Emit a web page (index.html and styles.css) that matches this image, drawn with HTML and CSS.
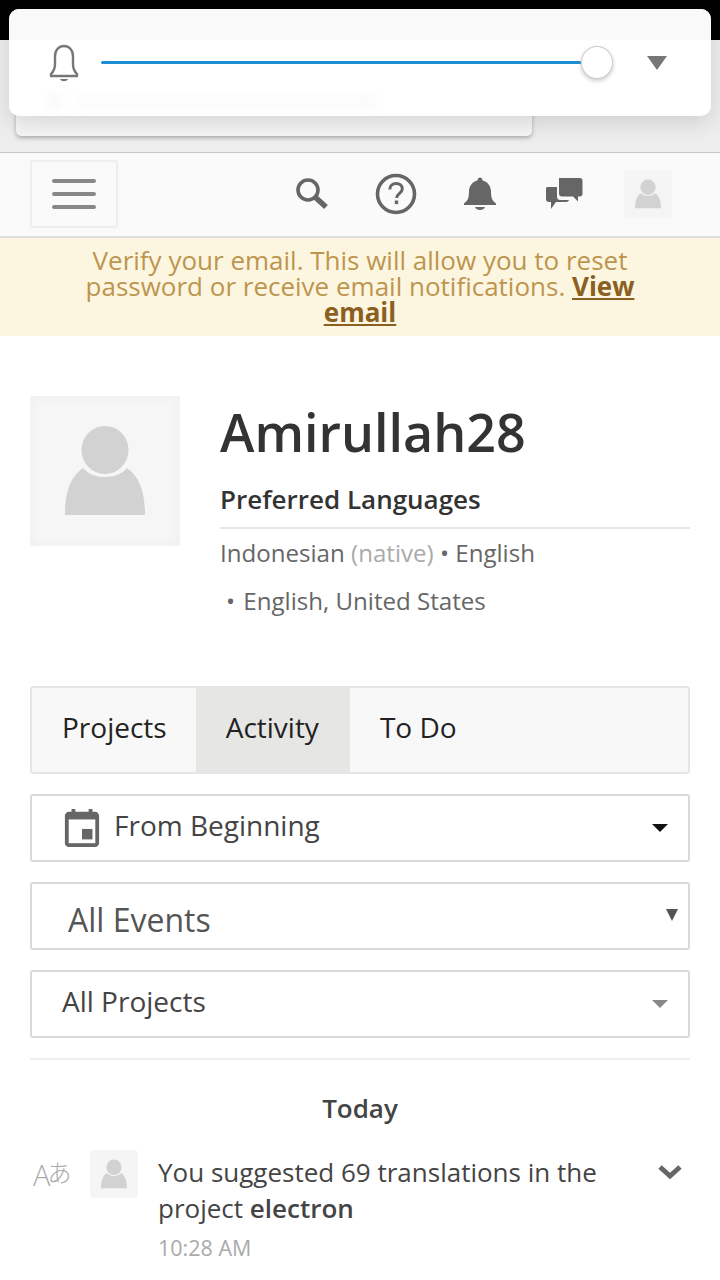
FILE: index.html
```html
<!DOCTYPE html>
<html lang="en">
<head>
<meta charset="utf-8">
<title>Amirullah28</title>
<link rel="stylesheet" href="styles.css">
</head>
<body>
<div class="statusbar"></div>
<div class="shade"><div class="shade-card"></div></div>
<div class="volume">
  <div class="volume-ghost"></div>
  <div class="volume-row">
    <svg class="vol-bell" viewBox="0 0 32 44" width="32" height="44"><path d="M3 32c3-3 4-5 4-10v-8c0-6 4-10 9-10s9 4 9 10v8c0 5 1 7 4 10v2H3z" fill="none" stroke="#777" stroke-width="2.4" stroke-linejoin="round"/><path d="M12 37h8c-1 3-7 3-8 0z" fill="#777"/></svg>
    <div class="track"><div class="knob"></div></div>
    <div class="vol-caret"></div>
  </div>
  <div class="volume-blur"><span class="blur-dot"></span><span class="blur-line"></span></div>
</div>
<nav class="navbar">
  <div class="burger"><span></span><span></span><span></span></div>
  <div class="nav-icons">
    <svg class="ic-search" viewBox="0 0 34 34" width="34" height="34"><circle cx="13" cy="13" r="10" fill="none" stroke="#666" stroke-width="3.6"/><path d="M20 20l11 10" stroke="#666" stroke-width="5.5" fill="none"/></svg>
    <svg class="ic-help" viewBox="0 0 42 42" width="42" height="42"><circle cx="21" cy="21" r="18.5" fill="none" stroke="#666" stroke-width="3.6"/><path d="M14.8 16.5c0-3.8 2.8-6 6.300-6 3.600 0 6.200 2.100 6.200 5.300 0 4.700-5.600 4.500-5.600 9.200" fill="none" stroke="#666" stroke-width="3"/><rect x="19.800" y="27.500" width="3.400" height="3.600" fill="#666"/></svg>
    <svg class="ic-bell" viewBox="0 3 34 35" width="34" height="36"><path d="M1 30c4-3 5-6 5-12 0-6 4-10 8.500-11 0-4 5-4 5 0C24 8 28 12 28 18c0 6 1 9 5 12v1.500H1z" fill="#666"/><path d="M12 33.500h10c-1 4-9 4-10 0z" fill="#666"/></svg>
    <svg class="ic-chat" viewBox="0 0 38 34" width="38" height="34"><path d="M2 10h10v9c0 3 1 4 4 4h8c-.5 1.500-2 2-3 2H11l-5 7v-7H4c-2 0-3-1-3-3V12c0-1 .5-2 1-2z" fill="#666"/><path d="M14 1h21c1.500 0 2.500 1 2.500 2.500V17c0 1.500-1 2.500-2.500 2.500h-2v5l-5-5H17c-2 0-3-1-3-3z" fill="#666"/></svg>
    <div class="nav-avatar"><svg viewBox="0 0 80 90" width="26" height="30"><use href="#person"/></svg></div>
  </div>
</nav>
<div class="banner">Verify your email. This will allow you to reset password or receive email notifications. <a>View email</a></div>
<main class="main">
  <section class="profile">
    <div class="avatar"><svg viewBox="0 0 80 90" width="80" height="90"><g id="person" fill="#d2d2d2"><ellipse cx="40" cy="24" rx="23.500" ry="24"/><path d="M18 42c5 6 13 9 22 9s17-3 22-9c11 8 18 21 18 47H0c0-26 7-39 18-47z"/></g></svg></div>
    <div class="info">
      <h1>Amirullah28</h1>
      <h2>Preferred Languages</h2>
      <div class="langs">
        <div class="lang-row">Indonesian <span class="native">(native)</span> • English</div>
        <div class="lang-row second"><span class="bullet">•</span> English, United States</div>
      </div>
    </div>
  </section>
  <div class="tabs">
    <div class="tab first">Projects</div>
    <div class="tab active">Activity</div>
    <div class="tab">To Do</div>
  </div>
  <div class="select date">
    <svg viewBox="0 0 36 40" width="36" height="38"><path d="M4 3h3V0h4v3h14V0h4v3h3c2 0 4 2 4 4v29c0 2-2 4-4 4H4c-2 0-4-2-4-4V7c0-2 2-4 4-4z" fill="#666"/><rect x="4" y="11" width="28" height="25" fill="#fff"/><rect x="18" y="21" width="11" height="11" fill="#666"/></svg>
    <span>From Beginning</span>
    <i class="caret dark"></i>
  </div>
  <div class="select events"><span>All Events</span><i class="events-caret"></i></div>
  <div class="select projects"><span>All Projects</span><i class="caret grey"></i></div>
  <hr class="rule">
  <h3 class="day">Today</h3>
  <article class="item">
    <div class="item-type"><span class="a">A</span><span class="ja">あ</span></div>
    <div class="item-avatar"><svg viewBox="0 0 80 90" width="26" height="30"><use href="#person"/></svg></div>
    <div class="item-body">
      <p>You suggested 69 translations in the project <strong>electron</strong></p>
      <time>10:28 AM</time>
    </div>
    <svg class="chev" viewBox="0 0 26 16" width="26" height="16"><path d="M3 3l10 9 10-9" fill="none" stroke="#666" stroke-width="5"/></svg>
  </article>
</main>
</body>
</html>
```
FILE: styles.css
```css
* { box-sizing: border-box; }
html, body { margin: 0; padding: 0; }
body { width: 720px; height: 1280px; overflow: hidden; background: #fff; font-family: "Open Sans", "Noto Sans", sans-serif; color: #333; position: relative; }
.statusbar { height: 40px; background: #000; }
.shade { height: 113px; background: #eee; border-bottom: 1px solid #c4c4c4; padding: 0 0 0 16px; }
.shade-card { width: 516px; height: 96px; background: #f6f6f6; border-radius: 0 0 5px 5px; box-shadow: 0 2px 4px rgba(0,0,0,.28); }
.volume { position: absolute; left: 9px; top: 9px; width: 702px; height: 107px; border-radius: 10px; background: #fff; box-shadow: 0 6px 24px rgba(0,0,0,.14); overflow: hidden; }
.volume-ghost { height: 31px; background: #f9f9f9; }
.volume-row { display: flex; align-items: center; height: 44px; padding-left: 39px; margin-top: 2px; }
.vol-bell { flex: none; }
.track { position: relative; width: 480px; height: 3px; margin-left: 21px; background: #1b8fd1; border-radius: 2px; margin-top: -4px; }
.knob { position: absolute; right: -32px; top: -15px; width: 32px; height: 33px; border-radius: 50%; background: #fff; border: 1px solid #ccc; box-shadow: 0 2px 4px rgba(0,0,0,.2); }
.vol-caret { width: 0; height: 0; margin-left: 66px; margin-top: -3px; border-left: 10px solid transparent; border-right: 10px solid transparent; border-top: 14px solid #777; }
.volume-blur { display: flex; align-items: center; gap: 14px; padding: 6px 0 0 36px; filter: blur(4px); opacity: .3; }
.blur-dot { width: 18px; height: 18px; border-radius: 50%; background: #eee; }
.blur-line { width: 300px; height: 14px; background: #f2f2f2; }
.navbar { height: 85px; background: #fafafa; border-bottom: 2px solid #ddd; display: flex; padding: 7px 48px 0 30px; }
.burger { width: 88px; height: 68px; border: 2px solid #eee; border-radius: 3px; display: flex; flex-direction: column; justify-content: center; gap: 9px; padding: 0 20px; }
.burger span { display: block; height: 4px; border-radius: 2px; background: #888; }
.nav-icons { display: flex; align-items: flex-start; margin-left: auto; height: 68px; }
.ic-search { margin: 17px 1px 0 -1px; }
.ic-help { margin: 13px 0 0 45px; }
.ic-bell { margin: 16px 0 0 46px; }
.ic-chat { margin: 17px 1px 0 48px; }
.nav-avatar { width: 48px; height: 48px; margin: 10px 0 0 40px; background: #f5f5f5; border-radius: 3px; display: flex; align-items: center; justify-content: center; }
.banner { height: 98px; background: #fcf6e0; color: #bd954f; font-size: 26px; line-height: 26px; text-align: center; padding: 9px 60px 0; }
.banner a { color: #8a5f1f; font-weight: 700; text-decoration: underline; }
.main { padding: 60px 30px 0; }
.profile { display: flex; height: 290px; }
.avatar { width: 150px; height: 150px; flex: none; background: #f6f6f6; box-shadow: inset 0 0 14px rgba(0,0,0,.03); border-radius: 3px; display: flex; align-items: center; justify-content: center; }
.info { flex: 1; margin-left: 40px; }
h1 { margin: 0; font-size: 52px; line-height: 72px; font-weight: 600; color: #333; }
h2 { margin: 14px 0 0; font-size: 26px; line-height: 34px; font-weight: 600; color: #333; padding-bottom: 11px; border-bottom: 2px solid #e6e6e6; }
.langs { font-size: 24.100px; line-height: 48px; color: #666; }
.native { color: #aaa; }
.lang-row.second { padding-left: 6px; }
.bullet { margin-right: 2px; }
.tabs { display: flex; height: 88px; margin-top: 0; background: #f8f8f8; border: 2px solid #e6e6e6; border-radius: 3px; }
.tab { font-size: 28px; line-height: 78px; color: #222; padding: 0 30px; }
.tab.first { padding-right: 29px; }
.tab.active { background: #e6e6e4; padding: 0 31px 0 30px; }
.select { display: flex; align-items: center; height: 68px; border: 2px solid #d9d9d9; border-radius: 3px; color: #444; font-size: 28px; position: relative; }
.date { margin-top: 20px; padding-left: 32px; }
.date span { margin-left: 14px; position: relative; top: -3px; }
.events { margin-top: 20px; padding-left: 36px; font-size: 32px; color: #555; }
.events span { position: relative; top: 3px; }
.events-caret { position: absolute; right: 10px; top: 25px; width: 0; height: 0; border-left: 6px solid transparent; border-right: 6px solid transparent; border-top: 12px solid #555; }
.projects { margin-top: 20px; padding-left: 30px; }
.projects span { position: relative; top: -3px; }
.caret { position: absolute; right: 20px; top: 28px; width: 0; height: 0; border-left: 8px solid transparent; border-right: 8px solid transparent; border-top: 8px solid #111; }
.caret.grey { border-top-color: #888; }
.rule { margin: 20px 0 0; border: 0; border-top: 2px solid #eee; }
.day { margin: 31px 0 0; text-align: center; font-size: 26px; line-height: 34px; font-weight: 600; color: #444; }
.item { display: flex; margin-top: 25px; position: relative; }
.item-type { width: 60px; flex: none; color: #aaa; font-size: 29px; line-height: 42px; white-space: nowrap; padding: 4px 0 0 3px; font-weight: 300; }
.item-type .ja { font-family: "Noto Sans CJK JP", sans-serif; font-size: 24px; position: relative; top: -4px; margin-left: -3px; }
.item-avatar { width: 48px; height: 48px; flex: none; background: #f5f5f5; border-radius: 4px; display: flex; align-items: center; justify-content: center; }
.item-body { margin-left: 20px; width: 470px; padding-top: 4px; }
.item-body p { margin: 0; font-size: 26px; line-height: 36px; color: #444; }
.item-body strong { font-weight: 600; }
.item-body time { display: block; margin-top: 7px; font-size: 21.500px; line-height: 30px; color: #aaa; }
.chev { position: absolute; right: 7px; top: 14px; }
```
